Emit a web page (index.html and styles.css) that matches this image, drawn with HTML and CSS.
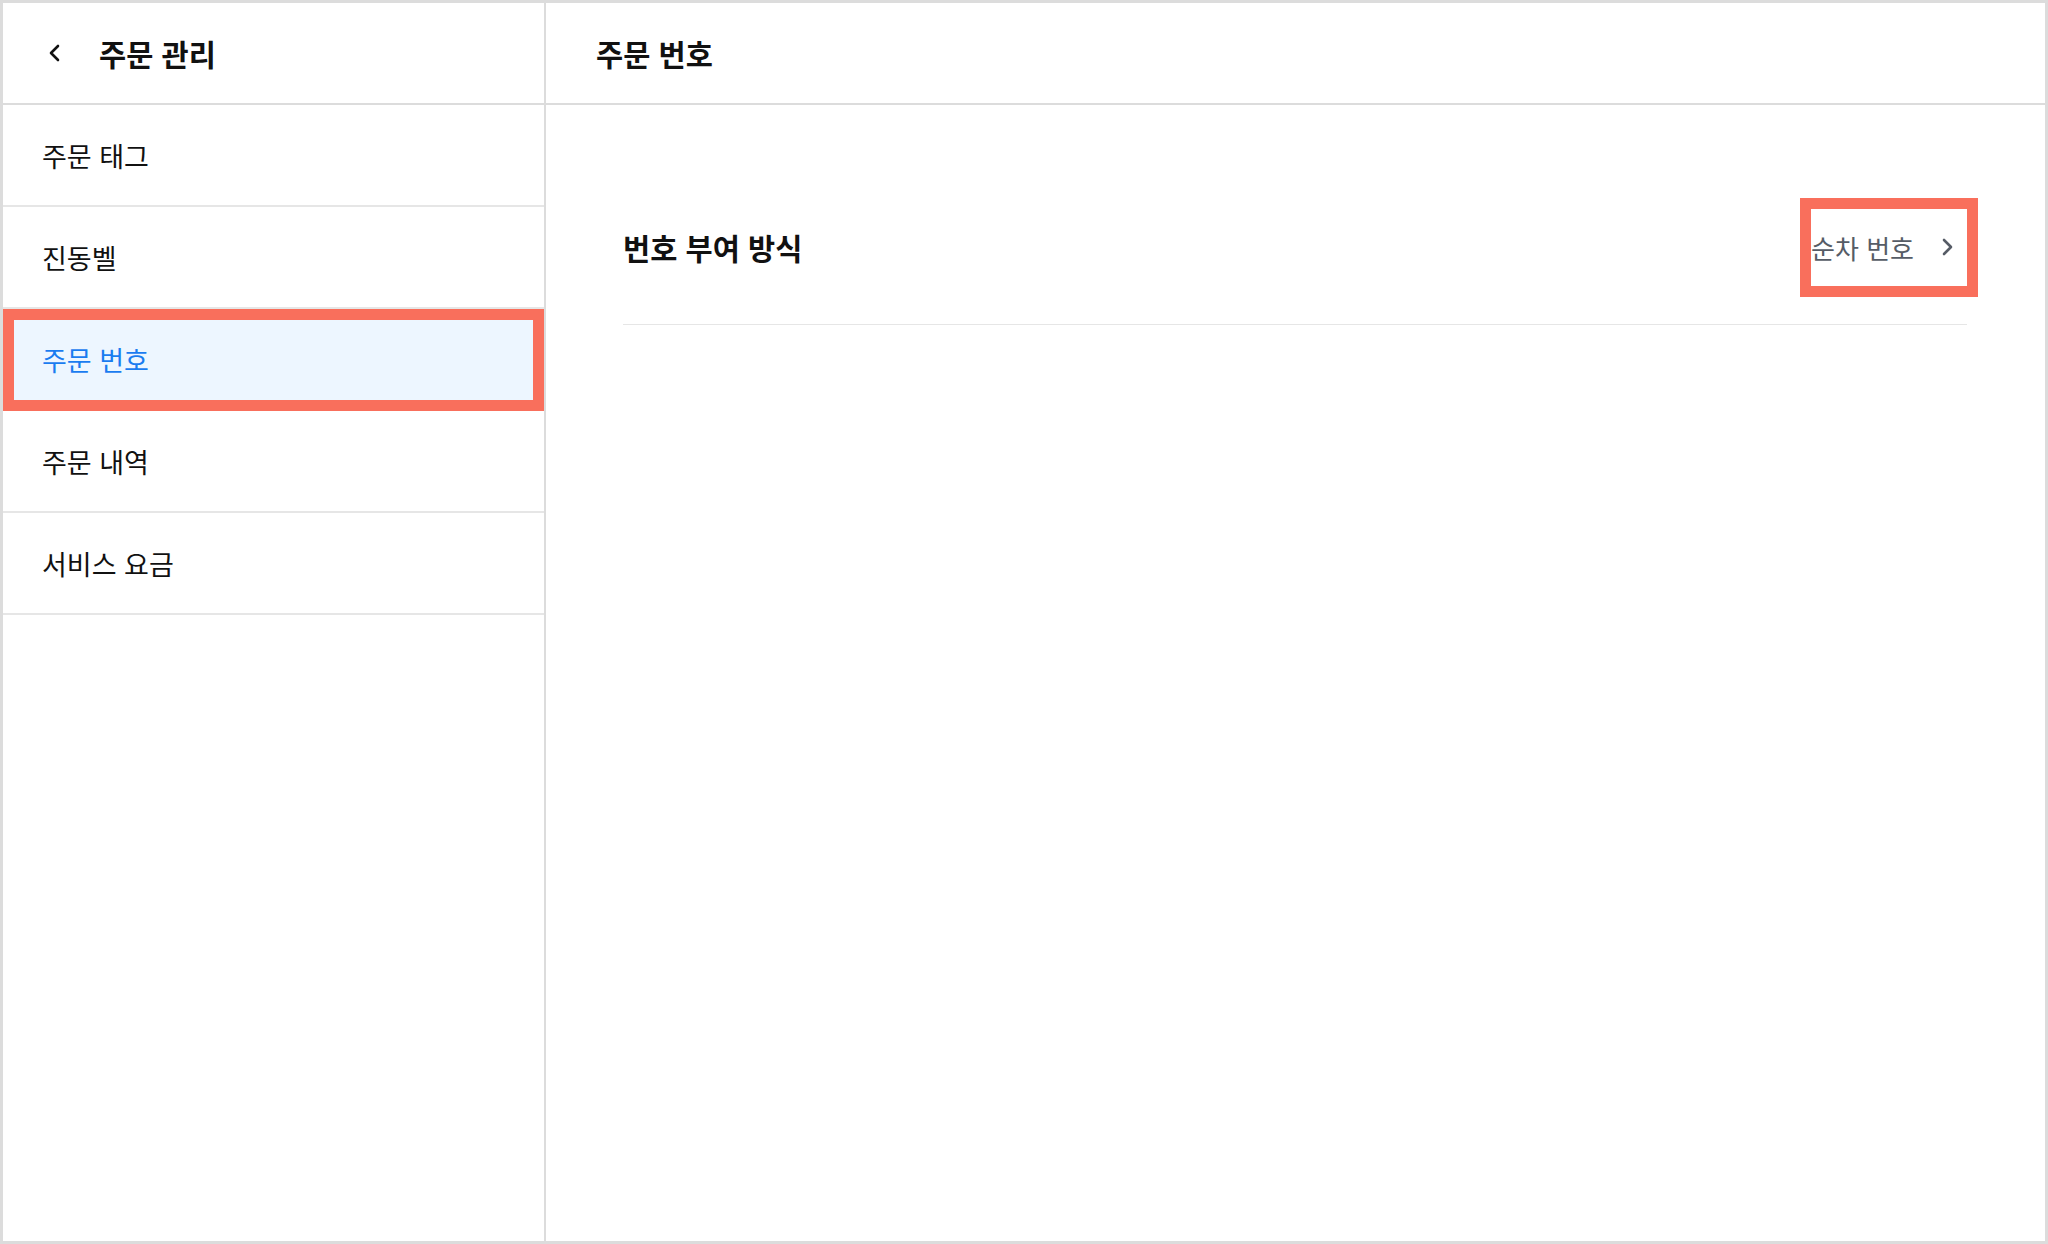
FILE: index.html
```html
<!DOCTYPE html>
<html lang="ko">
<head>
  <meta charset="UTF-8" />
  <title>주문 번호</title>
  <link rel="stylesheet" href="styles.css">
</head>
<body>

  <div class="frame">
    <aside class="sidebar">
      <div class="side-head">
        <svg class="back" width="12" height="18" viewBox="0 0 12 18">
          <path d="M10 2 L3 9 L10 16" fill="none" stroke="#111" stroke-width="2.6" stroke-linecap="round" stroke-linejoin="round"/>
        </svg>
        <span class="title">주문 관리</span>
      </div>
      <ul class="menu">
        <li class="menu-item">주문 태그</li>
        <li class="menu-item">진동벨</li>
        <li class="menu-item active">주문 번호</li>
        <li class="menu-item">주문 내역</li>
        <li class="menu-item">서비스 요금</li>
      </ul>
    </aside>

    <main class="content">
      <div class="content-head">
        <span class="title">주문 번호</span>
      </div>
      <div class="settings">
        <div class="setting-row">
          <span class="setting-label">번호 부여 방식</span>
          <span class="setting-value">
            순차 번호
            <svg width="12" height="20" viewBox="0 0 12 20">
              <path d="M2 3 L9 10 L2 17" fill="none" stroke="#565c66" stroke-width="2.6" stroke-linecap="round" stroke-linejoin="round"/>
            </svg>
          </span>
        </div>
      </div>
    </main>
  </div>

</body>
</html>
```

FILE: styles.css
```css
* {
  box-sizing: border-box;
}

body {
  margin: 0;
  background: #fff;
  color: #111;
  font-family: "Noto Sans CJK KR", "Noto Sans", sans-serif;
  overflow: hidden;
}

.frame {
  width: 2048px;
  height: 1244px;
  border: 3px solid #dcdcdc;
  display: grid;
  grid-template-columns: 543px 1fr;
}

.sidebar {
  border-right: 2px solid #dcdcdc;
}

.side-head,
.content-head {
  height: 102px;
  border-bottom: 2px solid #dcdcdc;
  display: flex;
  align-items: center;
}

.side-head {
  padding-left: 45px;
  gap: 39px;
}

.content-head {
  padding-left: 50px;
}

.title {
  font-size: 29.5px;
  font-weight: bold;
}

.menu {
  list-style: none;
  margin: 0;
  padding: 0;
}

.menu-item {
  position: relative;
  height: 102px;
  border-bottom: 2px solid #e6e6e6;
  display: flex;
  align-items: center;
  padding-left: 39px;
  font-size: 27px;
  color: #111;
}

.menu-item.active {
  background: #edf6ff;
  color: #1a7cf0;
}

/* red marker around the selected row */
.menu-item.active::after {
  content: "";
  position: absolute;
  top: 0;
  left: 0;
  right: 0;
  bottom: -2px;
  border: 11px solid #f96f5c;
}

.settings {
  padding: 65px 78px 0 77px;
}

.setting-row {
  height: 155px;
  border-bottom: 1px solid #e6e6e6;
  display: flex;
  align-items: center;
  justify-content: space-between;
}

.setting-label {
  font-size: 29.5px;
  font-weight: bold;
}

.setting-value {
  height: 77px;
  display: flex;
  align-items: center;
  gap: 28px;
  padding-right: 13px;
  font-size: 26px;
  color: #565c66;
  outline: 11px solid #f96f5c;
}
```
